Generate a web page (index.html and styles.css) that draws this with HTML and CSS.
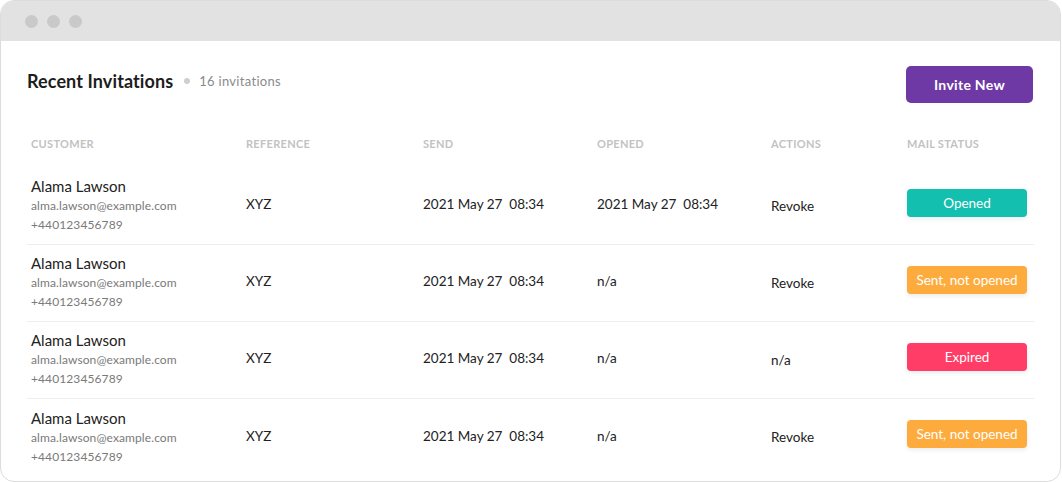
FILE: index.html
```html
<!DOCTYPE html>
<html>
<head>
<meta charset="utf-8">
<link rel="stylesheet" href="styles.css">
</head>
<body>
<div class="window">
  <div class="titlebar">
    <span class="dot"></span><span class="dot"></span><span class="dot"></span>
  </div>
  <div class="content">
    <div class="head">
      <div class="title-wrap">
        <h1 class="title">Recent Invitations</h1>
        <span class="sep"></span>
        <span class="count">16 invitations</span>
      </div>
      <button class="btn">Invite New</button>
    </div>
    <div class="table">
      <div class="row th">
        <div>Customer</div><div>Reference</div><div>Send</div><div>Opened</div><div>Actions</div><div>Mail Status</div>
      </div>
      <div class="row tr">
        <div class="cust"><div class="name">Alama Lawson</div><div class="sub">alma.lawson@example.com</div><div class="sub">+440123456789</div></div>
        <div>XYZ</div><div class="date">2021 May 27  08:34</div><div class="date">2021 May 27  08:34</div><div class="act">Revoke</div>
        <div><span class="badge teal">Opened</span></div>
      </div>
      <div class="row tr">
        <div class="cust"><div class="name">Alama Lawson</div><div class="sub">alma.lawson@example.com</div><div class="sub">+440123456789</div></div>
        <div>XYZ</div><div class="date">2021 May 27  08:34</div><div>n/a</div><div class="act">Revoke</div>
        <div><span class="badge orange">Sent, not opened</span></div>
      </div>
      <div class="row tr">
        <div class="cust"><div class="name">Alama Lawson</div><div class="sub">alma.lawson@example.com</div><div class="sub">+440123456789</div></div>
        <div>XYZ</div><div class="date">2021 May 27  08:34</div><div>n/a</div><div class="act">n/a</div>
        <div><span class="badge red">Expired</span></div>
      </div>
      <div class="row tr last">
        <div class="cust"><div class="name">Alama Lawson</div><div class="sub">alma.lawson@example.com</div><div class="sub">+440123456789</div></div>
        <div>XYZ</div><div class="date">2021 May 27  08:34</div><div>n/a</div><div class="act">Revoke</div>
        <div><span class="badge orange">Sent, not opened</span></div>
      </div>
    </div>
  </div>
</div>
</body>
</html>
```
FILE: styles.css
```css
* { box-sizing: border-box; }
html, body { margin: 0; padding: 0; background: #fff; }
body { font-family: Lato, "Open Sans", sans-serif; color: #222; }
.window {
  width: 1061px;
  height: 482px;
  border: 1px solid #dcdcdc;
  border-radius: 14px;
  overflow: hidden;
  background: #fff;
}
.titlebar {
  height: 40px;
  background: #e2e2e2;
  display: flex;
  align-items: center;
  gap: 9px;
  padding-left: 24px;
}
.dot { width: 13px; height: 13px; border-radius: 50%; background: #c9c9c9; }
.content { padding: 25px 26px 0 26px; }
.head { display: flex; justify-content: space-between; align-items: center; height: 37px; }
.title-wrap { display: flex; align-items: center; margin-top: -8px; }
.title { margin: 0; font-size: 18px; font-weight: 700; color: #1d1d1d; letter-spacing: 0.1px; }
.sep { width: 6px; height: 6px; border-radius: 50%; background: #cfcfcf; margin: 0 9px 0 11px; }
.count { font-size: 13px; color: #8a8a8a; letter-spacing: 0.3px; }
.btn {
  width: 127px; height: 37px;
  border: 0; border-radius: 5px;
  background: #6e39a5; color: #fff;
  font-family: inherit; font-size: 14px; font-weight: 700; letter-spacing: 0.3px;
  margin-right: 1px;
}
.table { margin-top: 33px; }
.row {
  display: grid;
  grid-template-columns: 215px 177px 174px 174px 136px 1fr;
  padding-left: 4px;
  align-items: center;
}
.th { font-size: 11px; font-weight: 700; color: #c2c2c2; text-transform: uppercase; letter-spacing: 0.3px; height: 14px; margin-bottom: 18px; }
.tr { height: 77px; border-bottom: 1px solid #eeeeee; font-size: 13.5px; color: #222; padding-bottom: 4px; }
.tr.last { border-bottom: 0; }
.date { white-space: pre; }
.act { padding-top: 3px; }
.cust { padding-top: 3px; }
.name { font-size: 15px; color: #222; line-height: 19px; }
.sub { font-size: 12px; color: #7a7a7a; line-height: 19px; letter-spacing: 0.1px; }
.badge {
  display: flex; align-items: center; justify-content: center;
  width: 120px; height: 28px; border-radius: 4px;
  color: #fff; font-size: 13.5px;
  box-shadow: 0 2px 5px rgba(0,0,0,0.08);
  margin-top: -3px;
}
.teal { background: #13bfae; }
.orange { background: #fdab3d; }
.red { background: #ff3d66; }
```
